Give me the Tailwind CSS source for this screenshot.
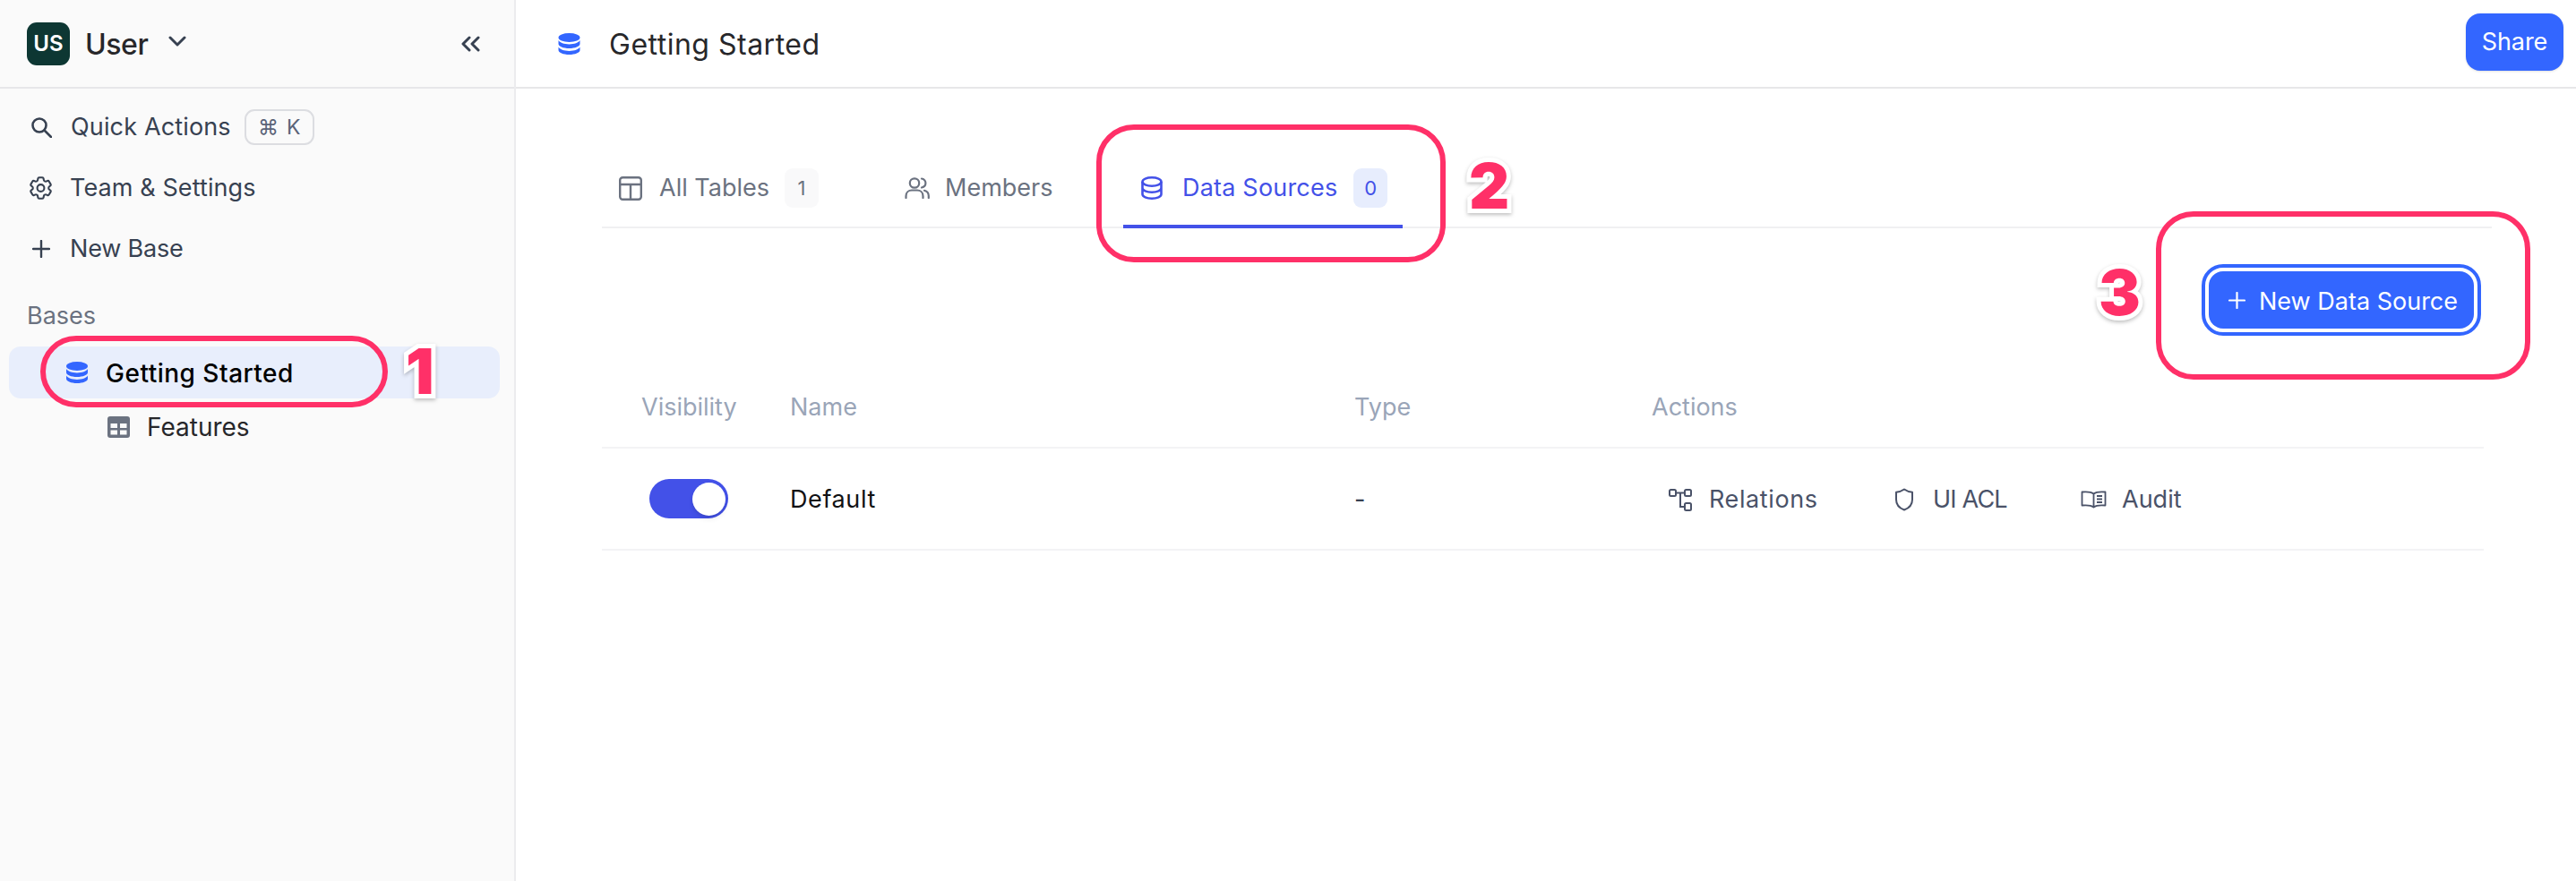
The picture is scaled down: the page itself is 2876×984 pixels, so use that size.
<!DOCTYPE html>
<html lang="en">
  <head>
    <meta charset="UTF-8" />
    <title>Getting Started</title>
    <script src="https://cdn.jsdelivr.net/npm/@tailwindcss/browser@4"></script>
  </head>
  <body class="bg-white font-['Inter',sans-serif] text-[#374151]">
    <div class="relative flex h-[984px] w-[2876px] overflow-hidden">
      <!-- Sidebar -->
      <aside class="h-full w-[576px] shrink-0 border-r-2 border-[#ececee] bg-[#fafafa]">
        <div class="flex h-[99px] items-center border-b-2 border-[#e7e7e9] pl-[30px] pr-[38px]">
          <div class="flex h-[48px] w-[48px] items-center justify-center rounded-[11px] bg-[#0d3733] text-[24px] font-semibold text-white">US</div>
          <span class="ml-[17px] mt-[2px] text-[32px] font-medium tracking-[-0.4px] text-[#27272a]">User</span>
          <svg class="ml-[22px] -mt-[4px]" width="20" height="13" viewBox="0 0 20 13" fill="none" stroke="#374151" stroke-width="3" stroke-linecap="round" stroke-linejoin="round"><path d="M2 2l8 8 8-8" /></svg>
          <svg class="ml-auto" width="22" height="18" viewBox="0 0 22 18" fill="none" stroke="#374151" stroke-width="3" stroke-linecap="round" stroke-linejoin="round"><path d="M10 2L3 9l7 7M20 2l-7 7 7 7" /></svg>
        </div>
        <nav class="pt-[9px]">
          <div class="flex h-[68px] items-center pl-[34px] text-[27px] tracking-[0.15px]">
            <svg class="mr-[21px]" width="24" height="24" viewBox="0 0 24 24" fill="none" stroke="#374151" stroke-width="2.6" stroke-linecap="round"><circle cx="10" cy="10" r="7.5" /><path d="M15.5 15.5L23 23" /></svg>
            <span>Quick Actions</span>
            <span class="ml-[15px] flex h-[40px] w-[78px] items-center justify-center gap-[9px] rounded-[11px] border-2 border-[#dcdde1] text-[23px] tracking-normal text-[#5b6478]"><span>⌘</span><span>K</span></span>
          </div>
          <div class="flex h-[68px] items-center pl-[33px] text-[27px] tracking-[0.1px]">
            <svg class="mr-[20px]" width="25" height="26" viewBox="2.5 2 19 20" fill="none" stroke="#374151" stroke-width="1.600" stroke-linecap="round" stroke-linejoin="round"><path d="M9.594 3.94c.09-.542.56-.94 1.11-.94h2.593c.55 0 1.02.398 1.11.94l.213 1.281c.063.374.313.686.645.87.074.04.147.083.22.127.325.196.72.257 1.075.124l1.217-.456a1.125 1.125 0 0 1 1.37.49l1.296 2.247a1.125 1.125 0 0 1-.26 1.431l-1.003.827c-.293.241-.438.613-.43.992a7.723 7.723 0 0 1 0 .255c-.008.378.137.75.43.991l1.004.827c.424.35.534.955.26 1.43l-1.298 2.247a1.125 1.125 0 0 1-1.369.491l-1.217-.456c-.355-.133-.75-.072-1.076.124a6.47 6.47 0 0 1-.22.128c-.331.183-.581.495-.644.869l-.213 1.281c-.09.543-.56.94-1.11.94h-2.594c-.55 0-1.019-.398-1.11-.94l-.213-1.281c-.062-.374-.312-.686-.644-.87a6.52 6.52 0 0 1-.22-.127c-.325-.196-.72-.257-1.076-.124l-1.217.456a1.125 1.125 0 0 1-1.369-.49l-1.297-2.247a1.125 1.125 0 0 1 .26-1.431l1.004-.827c.292-.24.437-.613.43-.991a6.932 6.932 0 0 1 0-.255c.007-.38-.138-.751-.43-.992l-1.004-.827a1.125 1.125 0 0 1-.26-1.43l1.297-2.247a1.125 1.125 0 0 1 1.37-.491l1.216.456c.356.133.751.072 1.076-.124.072-.044.146-.086.22-.128.332-.183.582-.495.644-.869l.214-1.28Z" /><circle cx="12" cy="12" r="3" /></svg>
            <span>Team &amp; Settings</span>
          </div>
          <div class="flex h-[68px] items-center pl-[36px] text-[27px] tracking-[-0.2px]">
            <svg class="mr-[22px]" width="20" height="20" viewBox="0 0 20 20" fill="none" stroke="#374151" stroke-width="2.4" stroke-linecap="round"><path d="M10 1v18M1 10h18" /></svg>
            <span>New Base</span>
          </div>
        </nav>
        <div class="mt-[7px] flex h-[68px] items-center pl-[30px] text-[27px] text-[#6b7280]">Bases</div>
        <div class="ml-[10px] flex h-[58px] w-[548px] items-center rounded-[13px] bg-[#e8eefc] pl-[64px] text-[28px] font-medium tracking-[0.5px] text-black">
          <svg class="mr-[20px]" width="24" height="24" viewBox="0 0 24 24" fill="#3366ff"><ellipse cx="12" cy="5" rx="12" ry="5" /><path d="M0 8v4c0 2.800 5.400 5 12 5s12-2.200 12-5V8c-1.500 2.800-6.300 4.400-12 4.400S1.500 10.800 0 8z" /><path d="M0 15.500V19c0 2.800 5.400 5 12 5s12-2.200 12-5v-3.500c-1.500 2.800-6.300 4.400-12 4.400S1.500 18.300 0 15.500z" /></svg>
          <span class="mt-[2px]">Getting Started</span>
        </div>
        <div class="flex h-[64px] items-center pl-[120px] text-[28px] text-[#27272a]">
          <svg class="mr-[19px]" width="25" height="24" viewBox="0 0 25 24"><rect width="25" height="24" rx="3" fill="#6b7280" /><path fill="#fafafa" d="M3.500 8h7.500v5H3.500zM14 8h7.500v5H14zM3.500 15.500h7.500v5H3.500zM14 15.500h7.500v5H14z" /></svg>
          <span>Features</span>
        </div>
      </aside>

      <!-- Main -->
      <main class="min-w-0 flex-1">
        <header class="flex h-[99px] items-center border-b-2 border-[#e7e7e9] pl-[47px] pr-[14px]">
          <svg class="mr-[32px]" width="25" height="24" viewBox="0 0 24 24" fill="#3366ff"><ellipse cx="12" cy="5" rx="12" ry="5" /><path d="M0 8v4c0 2.800 5.400 5 12 5s12-2.200 12-5V8c-1.500 2.800-6.300 4.400-12 4.400S1.500 10.800 0 8z" /><path d="M0 15.500V19c0 2.800 5.400 5 12 5s12-2.200 12-5v-3.500c-1.500 2.800-6.300 4.400-12 4.400S1.500 18.300 0 15.500z" /></svg>
          <span class="mt-[2px] text-[32px] tracking-[0.5px] text-[#27272a]">Getting Started</span>
          <button class="-mt-[3px] ml-auto flex h-[64px] w-[109px] items-center justify-center rounded-[16px] bg-[#3366ff] text-[27px] tracking-[-0.1px] text-white shadow-sm">Share</button>
        </header>

        <div class="ml-[96px] w-[2110px]">
          <div class="flex h-[156px] items-end gap-[60px] border-b-2 border-[#f0f0f2] text-[27px] text-[#6b7280]">
            <div class="-mb-[2px] flex h-[100px] w-[258px] items-center border-b-4 border-transparent pl-[19px] pt-[14px]">
              <svg class="mr-[19px]" width="26" height="27" viewBox="0 0 26 27" fill="none" stroke="#6b7280" stroke-width="2.400" stroke-linejoin="round"><rect x="1.200" y="1.200" width="23.600" height="24.600" rx="3" /><path d="M1.200 9h23.600M13 9v16.800" /></svg>
              <span>All Tables</span>
              <span class="ml-[17px] flex h-[44px] w-[38px] items-center justify-center rounded-[9px] bg-[#f9f9fa] text-[22px]">1</span>
            </div>
            <div class="-mb-[2px] flex h-[100px] w-[204px] items-center border-b-4 border-transparent pl-[20px] pt-[14px]">
              <svg class="mr-[17px]" width="28" height="24" viewBox="0 0 28 24" fill="none" stroke="#6b7280" stroke-width="2.200" stroke-linecap="round"><circle cx="11" cy="6.500" r="5.200" /><path d="M1.500 23v-2c0-4 3-6.500 6.500-6.500h6c3.500 0 6.500 2.500 6.500 6.500v2M19 1.500c3 .7 4.400 3 4.400 5s-1.400 4.300-4.400 5M22 14.800c3 .8 4.800 3 4.800 6V23" /></svg>
              <span>Members</span>
            </div>
            <div class="-mb-[2px] flex h-[100px] w-[312px] items-center border-b-4 border-[#4351e8] pl-[20px] pt-[14px] tracking-[0.2px] text-[#4351e8]">
              <svg class="mr-[22px]" width="24" height="26" viewBox="0 0 24 26" fill="none" stroke="#4351e8" stroke-width="2.600"><ellipse cx="12" cy="6" rx="10.500" ry="4.700" /><path d="M1.500 6v14c0 2.600 4.700 4.700 10.500 4.700S22.500 22.600 22.500 20V6M1.500 13c0 2.600 4.700 4.700 10.500 4.700S22.500 15.600 22.500 13" /></svg>
              <span>Data Sources</span>
              <span class="ml-[18px] flex h-[44px] w-[38px] items-center justify-center rounded-[9px] bg-[#e7edfd] text-[22px]">0</span>
            </div>
          </div>

          <div class="flex h-[155px] justify-end pr-[12px] pt-[40px]">
            <button class="flex h-[80px] w-[312px] items-center rounded-[24px] border-[4px] border-[#3366ff] bg-white p-[4px]">
              <span class="flex h-full w-full items-center rounded-[16px] bg-[#3366ff] pl-[22px] text-[27px] text-white">
                <svg class="mr-[15px]" width="19" height="19" viewBox="0 0 19 19" fill="none" stroke="#fff" stroke-width="2.200" stroke-linecap="round"><path d="M9.500 1v17M1 9.500h17" /></svg>
                <span class="mt-[4px]">New Data Source</span>
              </span>
            </button>
          </div>

          <div class="w-[2101px] text-[27px]">
            <div class="grid h-[91px] grid-cols-[211px_630px_332px_1fr] items-center border-b-2 border-[#f3f3f5] pt-[2px] text-[#9aa5b8]">
              <div class="pl-[44px]">Visibility</div>
              <div class="-ml-[1px]">Name</div>
              <div class="-ml-[1px]">Type</div>
              <div class="-ml-[1px]">Actions</div>
            </div>
            <div class="grid h-[114px] grid-cols-[211px_630px_332px_1fr] items-center border-b-2 border-[#f3f3f5]">
              <div class="pl-[53px]">
                <div class="flex h-[44px] w-[88px] items-center justify-end rounded-full bg-[#4351e8] pr-[3px]">
                  <div class="h-[37px] w-[37px] rounded-full bg-white shadow-md"></div>
                </div>
              </div>
              <div class="-ml-[1px] mt-[2px] font-normal tracking-[0.6px] text-[#111114]">Default</div>
              <div class="-ml-[1px] mt-[2px] text-[#374151]">-</div>
              <div class="mt-[2px] flex items-center pl-[18px] text-[#4a5268]">
                <div class="flex w-[252px] items-center">
                  <svg class="mr-[19px]" width="26" height="25" viewBox="0 0 26 25" fill="none" stroke="#4a5268" stroke-width="2"><rect x="1" y="1" width="7" height="7" rx="1.500" /><rect x="18" y="1" width="7" height="7" rx="1.500" /><rect x="18" y="16" width="7" height="8" rx="1.500" /><path d="M8 4.500h10M13 4.500V20h5" /></svg>
                  <span class="tracking-[0.6px]">Relations</span>
                </div>
                <div class="flex w-[208px] items-center">
                  <svg class="mr-[21px]" width="22" height="26" viewBox="0 0 22 26" fill="none" stroke="#4a5268" stroke-width="2" stroke-linejoin="round"><path d="M11 1.500c2.800 2 5.800 3 9 3.200V13c0 5.500-3.500 9.500-9 11.500C5.500 22.500 2 18.500 2 13V4.700c3.200-.2 6.200-1.200 9-3.200z" /></svg>
                  <span class="tracking-[-0.8px]">UI ACL</span>
                </div>
                <div class="flex items-center">
                  <svg class="mr-[17px]" width="29" height="20" viewBox="0 0 29 20" fill="none" stroke="#4a5268" stroke-width="1.800" stroke-linejoin="round"><path d="M14.500 3.500C12 1.500 7 1 1.500 1.500v15c5.500-.5 10.500 0 13 2 2.500-2 7.500-2.500 13-2v-15c-5.500-.5-10.500 0-13 2zM14.500 3.500v15" /><path d="M18 6h6M18 9.500h6M18 13h6" /></svg>
                  <span>Audit</span>
                </div>
              </div>
            </div>
          </div>
        </div>
      </main>

      <!-- Annotations -->
      <div class="absolute left-[45px] top-[375px] h-[80px] w-[388px] rounded-full border-[6px] border-[#ff3068]"></div>
      <div class="absolute left-[1224px] top-[139px] h-[154px] w-[390px] rounded-[42px] border-[6px] border-[#ff3068]"></div>
      <div class="absolute left-[2407px] top-[236px] h-[188px] w-[418px] rounded-[42px] border-[6px] border-[#ff3068]"></div>
      <span class="absolute left-[453px] top-[373px] text-[70px] font-black leading-[84px] text-[#ff3068] [-webkit-text-stroke:10px_white] [paint-order:stroke_fill] drop-shadow-[0_2px_2px_rgba(0,0,0,0.25)]">1</span>
      <span class="absolute left-[1640px] top-[166px] text-[70px] font-black leading-[84px] text-[#ff3068] [-webkit-text-stroke:10px_white] [paint-order:stroke_fill] drop-shadow-[0_2px_2px_rgba(0,0,0,0.25)]">2</span>
      <span class="absolute left-[2343px] top-[285px] text-[70px] font-black leading-[84px] text-[#ff3068] [-webkit-text-stroke:10px_white] [paint-order:stroke_fill] drop-shadow-[0_2px_2px_rgba(0,0,0,0.25)]">3</span>
    </div>
  </body>
</html>
